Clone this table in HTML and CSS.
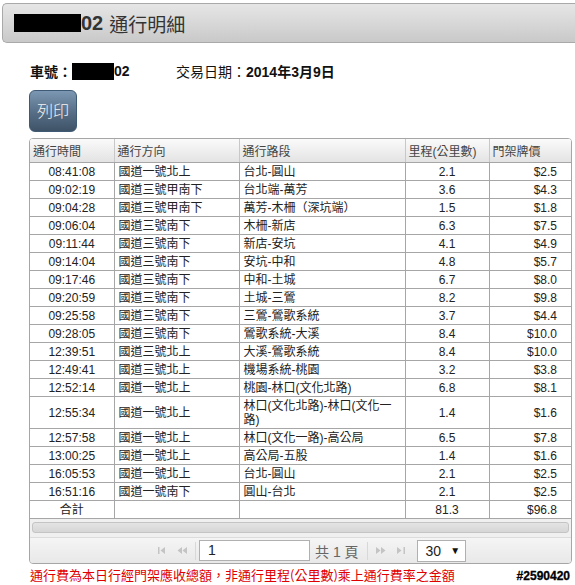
FILE: index.html
```html
<!DOCTYPE html>
<html lang="zh-Hant">
<head>
<meta charset="utf-8">
<title>通行明細</title>
<link rel="stylesheet" href="styles.css">
</head>
<body>
<div class="titlebar">
  <span class="redact redact-title"></span><b class="title-num">02</b><span class="title-text">通行明細</span>
</div>
<div class="info">
  <span class="info-plate"><b>車號：</b><span class="redact redact-plate"></span><b>02</b></span>
  <span class="info-date">交易日期：<b>2014年3月9日</b></span>
</div>
<button class="print-btn" type="button">列印</button>
<div class="grid">
  <table class="grid-table">
    <colgroup>
      <col class="c1"><col class="c2"><col class="c3"><col class="c4"><col class="c5">
    </colgroup>
    <thead>
      <tr><th>通行時間</th><th>通行方向</th><th>通行路段</th><th>里程(公里數)</th><th>門架牌價</th></tr>
    </thead>
    <tbody>
      <tr><td class="ctr">08:41:08</td><td>國道一號北上</td><td>台北-圓山</td><td class="ctr">2.1</td><td class="rgt">$2.5</td></tr>
      <tr><td class="ctr">09:02:19</td><td>國道三號甲南下</td><td>台北端-萬芳</td><td class="ctr">3.6</td><td class="rgt">$4.3</td></tr>
      <tr><td class="ctr">09:04:28</td><td>國道三號甲南下</td><td>萬芳-木柵（深坑端）</td><td class="ctr">1.5</td><td class="rgt">$1.8</td></tr>
      <tr><td class="ctr">09:06:04</td><td>國道三號南下</td><td>木柵-新店</td><td class="ctr">6.3</td><td class="rgt">$7.5</td></tr>
      <tr><td class="ctr">09:11:44</td><td>國道三號南下</td><td>新店-安坑</td><td class="ctr">4.1</td><td class="rgt">$4.9</td></tr>
      <tr><td class="ctr">09:14:04</td><td>國道三號南下</td><td>安坑-中和</td><td class="ctr">4.8</td><td class="rgt">$5.7</td></tr>
      <tr><td class="ctr">09:17:46</td><td>國道三號南下</td><td>中和-土城</td><td class="ctr">6.7</td><td class="rgt">$8.0</td></tr>
      <tr><td class="ctr">09:20:59</td><td>國道三號南下</td><td>土城-三鶯</td><td class="ctr">8.2</td><td class="rgt">$9.8</td></tr>
      <tr><td class="ctr">09:25:58</td><td>國道三號南下</td><td>三鶯-鶯歌系統</td><td class="ctr">3.7</td><td class="rgt">$4.4</td></tr>
      <tr><td class="ctr">09:28:05</td><td>國道三號南下</td><td>鶯歌系統-大溪</td><td class="ctr">8.4</td><td class="rgt">$10.0</td></tr>
      <tr><td class="ctr">12:39:51</td><td>國道三號北上</td><td>大溪-鶯歌系統</td><td class="ctr">8.4</td><td class="rgt">$10.0</td></tr>
      <tr><td class="ctr">12:49:41</td><td>國道三號北上</td><td>機場系統-桃園</td><td class="ctr">3.2</td><td class="rgt">$3.8</td></tr>
      <tr><td class="ctr">12:52:14</td><td>國道一號北上</td><td>桃園-林口(文化北路)</td><td class="ctr">6.8</td><td class="rgt">$8.1</td></tr>
      <tr><td class="ctr">12:55:34</td><td>國道一號北上</td><td>林口(文化北路)-林口(文化一<br>路)</td><td class="ctr">1.4</td><td class="rgt">$1.6</td></tr>
      <tr><td class="ctr">12:57:58</td><td>國道一號北上</td><td>林口(文化一路)-高公局</td><td class="ctr">6.5</td><td class="rgt">$7.8</td></tr>
      <tr><td class="ctr">13:00:25</td><td>國道一號北上</td><td>高公局-五股</td><td class="ctr">1.4</td><td class="rgt">$1.6</td></tr>
      <tr><td class="ctr">16:05:53</td><td>國道一號北上</td><td>台北-圓山</td><td class="ctr">2.1</td><td class="rgt">$2.5</td></tr>
      <tr><td class="ctr">16:51:16</td><td>國道一號南下</td><td>圓山-台北</td><td class="ctr">2.1</td><td class="rgt">$2.5</td></tr>
      <tr class="total"><td class="ctr">合計</td><td></td><td></td><td class="ctr">81.3</td><td class="rgt">$96.8</td></tr>
    </tbody>
  </table>
  <div class="hscroll"><div class="hscroll-bar"></div></div>
  <div class="pager">
    <span class="pg-icon"><svg width="8" height="7" viewBox="0 0 8 7"><rect x="0" y="0" width="1.5" height="7" fill="#c4c4c4"/><path d="M7 0 L2.5 3.5 L7 7 Z" fill="#c4c4c4"/></svg></span>
    <span class="pg-icon"><svg width="10" height="7" viewBox="0 0 10 7"><path d="M5 0 L0.5 3.5 L5 7 Z M10 0 L5.5 3.5 L10 7 Z" fill="#c4c4c4"/></svg></span>
    <span class="pg-sep"></span>
    <span class="pg-input">1</span>
    <span class="pg-total">共 1 頁</span>
    <span class="pg-sep"></span>
    <span class="pg-icon"><svg width="10" height="7" viewBox="0 0 10 7"><path d="M0 0 L4.5 3.5 L0 7 Z M5 0 L9.5 3.5 L5 7 Z" fill="#c4c4c4"/></svg></span>
    <span class="pg-icon"><svg width="8" height="7" viewBox="0 0 8 7"><path d="M0 0 L4.5 3.5 L0 7 Z" fill="#c4c4c4"/><rect x="6.5" y="0" width="1.5" height="7" fill="#c4c4c4"/></svg></span>
    <span class="pg-select">30 <span class="pg-arrow">▼</span></span>
  </div>
</div>
<div class="footer">
  <span class="note">通行費為本日行經門架應收總額，非通行里程(公里數)乘上通行費率之金額</span>
  <span class="stamp">#2590420</span>
</div>
</body>
</html>
```

FILE: styles.css
```css
html, body {
  margin: 0;
  padding: 0;
  background: #fff;
  overflow: hidden;
}
body {
  font-family: "Liberation Sans", Arial, "Noto Sans CJK TC", sans-serif;
  color: #333;
  width: 575px;
}
.titlebar {
  margin: 3px 0 0 2px;
  height: 38px;
  border: 1px solid #a9a9a9;
  border-right: none;
  border-radius: 5px 0 0 5px;
  background: linear-gradient(#e6e6e6, #c9c9c9);
  display: flex;
  align-items: center;
  padding-left: 11px;
  color: #333;
}
.redact {
  display: inline-block;
  background: #000;
}
.redact-title {
  width: 67px;
  height: 18px;
}
.title-num {
  font-size: 20px;
  font-weight: bold;
  margin-right: 6px;
}
.title-text {
  font-size: 19px;
  font-family: "Noto Sans CJK TC", sans-serif;
}
.info {
  display: flex;
  align-items: center;
  margin: 19px 0 0 30px;
  height: 18px;
  font-size: 14px;
  color: #111;
}
.info b {
  font-weight: bold;
}
.info-plate {
  display: flex;
  align-items: center;
  width: 146px;
}
.redact-plate {
  width: 42px;
  height: 17px;
}
.info-date {
  font-family: "Liberation Sans", "Noto Sans CJK TC", sans-serif;
}
.print-btn {
  display: block;
  margin: 10px 0 0 29px;
  width: 48px;
  height: 42px;
  padding: 0 0 2px 0;
  border: 1px solid #3f5a74;
  border-radius: 6px;
  background: linear-gradient(#7c97b3, #556d85 55%, #3f5367);
  color: #f4f4f4;
  font-family: "Noto Sans CJK TC", sans-serif;
  font-size: 16px;
  font-weight: 300;
  text-align: center;
}
.grid {
  margin: 6px 3px 0 29px;
  border: 1px solid #a6a6a6;
  border-radius: 4px;
  overflow: hidden;
  background: #f2f2f2;
}
.grid-table {
  border-collapse: collapse;
  width: 100%;
  table-layout: fixed;
  font-size: 12px;
  background: #fff;
}
.c1 { width: 84px; }
.c2 { width: 125px; }
.c3 { width: 166px; }
.c4 { width: 84px; }
.c5 { width: auto; }
.grid-table th {
  height: 23px;
  padding: 0 3px;
  text-align: left;
  font-weight: normal;
  color: #444;
  background: linear-gradient(#fafafa, #e3e3e3);
  border-left: 1px solid #c8c8c8;
  border-bottom: 1px solid #a6a6a6;
  white-space: nowrap;
}
.grid-table th:first-child {
  border-left: none;
}
.grid-table td {
  padding: 2px 4px 1px 4px;
  line-height: 14px;
  border: 1px solid #a6a6a6;
  border-top: none;
  color: #222;
  vertical-align: middle;
  white-space: nowrap;
}
.grid-table td:first-child {
  border-left: none;
}
.grid-table td:last-child {
  border-right: none;
}
.grid-table .ctr {
  text-align: center;
}
.grid-table .rgt {
  text-align: right;
  padding-right: 14px;
}
.hscroll {
  height: 15px;
  padding: 3px 2px 0 2px;
  background: #f0f0f0;
  border-bottom: 1px solid #dcdcdc;
}
.hscroll-bar {
  height: 9px;
  border: 1px solid #c4c4c4;
  border-radius: 3px;
  background: linear-gradient(#e4e4e4, #d6d6d6);
}
.pager {
  height: 25px;
  display: flex;
  align-items: center;
  padding-left: 122px;
  background: linear-gradient(#f5f5f5, #e8e8e8);
  font-size: 14px;
  color: #555;
}
.pg-icon {
  display: flex;
  align-items: center;
  width: 20px;
  justify-content: center;
}
.pg-sep {
  width: 1px;
  height: 18px;
  background: #d8d8d8;
  margin: 0 3px;
}
.pg-input {
  box-sizing: border-box;
  width: 111px;
  height: 21px;
  border: 1px solid #b0b0b0;
  background: #fff;
  padding-left: 8px;
  line-height: 19px;
  color: #222;
  margin-right: 5px;
}
.pg-total {
  font-family: "Liberation Sans", "Noto Sans CJK TC", sans-serif;
  color: #666;
  margin-right: 5px;
}
.pg-select {
  box-sizing: border-box;
  margin-left: 6px;
  width: 49px;
  height: 22px;
  border: 1px solid #b0b0b0;
  background: #fff;
  padding-left: 8px;
  line-height: 20px;
  color: #222;
  display: flex;
  align-items: center;
  gap: 9px;
}
.pg-arrow {
  font-size: 10px;
  color: #111;
}
.footer {
  display: flex;
  justify-content: space-between;
  align-items: flex-end;
  margin: 1px 5px 0 30px;
}
.note {
  font-family: "Noto Sans CJK TC", sans-serif;
  font-size: 13px;
  line-height: 16px;
  color: #e00000;
}
.stamp {
  font-size: 12px;
  font-weight: bold;
  color: #000;
  margin-top: 4px;
  text-shadow: 1px 0 #fff, -1px 0 #fff, 0 1px #fff, 0 -1px #fff;
  -webkit-text-stroke: 0.3px #000;
}
```
